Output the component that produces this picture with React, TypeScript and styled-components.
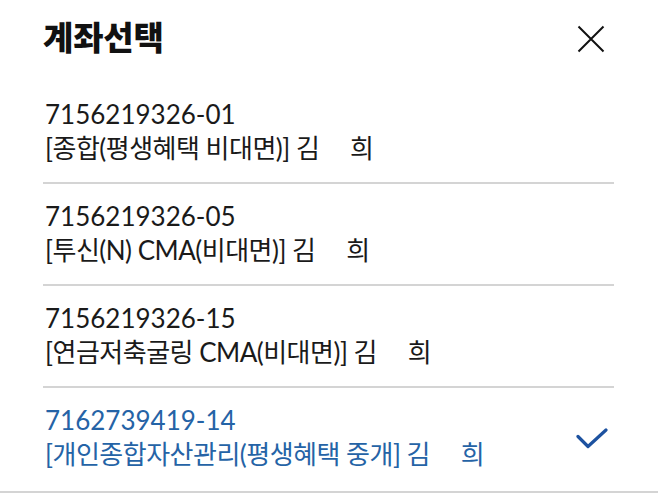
import React from "react";
import styled, { createGlobalStyle } from "styled-components";

const Global = createGlobalStyle`
  html, body { margin: 0; padding: 0; background: #ffffff; }
  body { font-family: Lato, "Noto Sans CJK KR", sans-serif; }
`;

const Sheet = styled.div`
  width: 658px;
  height: 493px;
  background: #ffffff;
  display: flex;
  flex-direction: column;
  box-sizing: border-box;
  border-bottom: 2px solid #d4d4d4;
  overflow: hidden;
`;

const Header = styled.header`
  height: 82px;
  display: flex;
  align-items: center;
  justify-content: space-between;
  padding: 0 44px 10px 43px;
  box-sizing: border-box;
`;

const Title = styled.h1`
  margin: 0;
  font-family: "Noto Sans CJK KR", sans-serif;
  font-weight: 900;
  font-size: 33px;
  line-height: 38px;
  color: #111111;
  letter-spacing: -0.2px;
`;

const CloseButton = styled.button`
  width: 28px;
  height: 28px;
  padding: 0;
  border: none;
  background: none;
  display: flex;
  align-items: center;
  justify-content: center;
  margin-right: 9px;
  margin-top: 6px;
`;

const List = styled.ul`
  list-style: none;
  margin: 0 44px 0 43px;
  padding: 0;
`;

const Row = styled.li<{ $last?: boolean }>`
  display: flex;
  align-items: center;
  justify-content: space-between;
  padding: 15px 0 17px 2px;
  border-bottom: ${(p) => (p.$last ? "none" : "2px solid #d4d4d4")};
`;

const Texts = styled.div<{ $selected?: boolean }>`
  display: flex;
  flex-direction: column;
  color: ${(p) => (p.$selected ? "#2563a6" : "#1a1a1a")};
`;

const Number = styled.div`
  font-family: Lato, "Noto Sans CJK KR", sans-serif;
  font-size: 26px;
  line-height: 34px;
  height: 34px;
`;

const Name = styled.div`
  font-family: Lato, "Noto Sans CJK KR", sans-serif;
  font-size: 26px;
  line-height: 34px;
  height: 34px;
  letter-spacing: -0.5px;
  white-space: pre;
`;

const Check = styled.svg`
  margin-right: 6px;
  margin-top: 4px;
  flex-shrink: 0;
`;

const accounts = [
  { no: "7156219326-01", name: "[종합(평생혜택 비대면)] 김     희" },
  { no: "7156219326-05", name: "[투신(N) CMA(비대면)] 김     희" },
  { no: "7156219326-15", name: "[연금저축굴링 CMA(비대면)] 김     희" },
  { no: "7162739419-14", name: "[개인종합자산관리(평생혜택 중개] 김     희", selected: true },
];

export default function App() {
  return (
    <>
      <Global />
      <Sheet>
        <Header>
          <Title>계좌선택</Title>
          <CloseButton aria-label="닫기">
            <svg width="28" height="28" viewBox="0 0 28 28">
              <path d="M1.5 1.5 L26.5 26.5 M26.5 1.5 L1.5 26.5" stroke="#111" strokeWidth="2" fill="none" />
            </svg>
          </CloseButton>
        </Header>
        <List>
          {accounts.map((a, i) => (
            <Row key={a.no} $last={i === accounts.length - 1}>
              <Texts $selected={a.selected}>
                <Number>{a.no}</Number>
                <Name>{a.name}</Name>
              </Texts>
              {a.selected && (
                <Check width="32" height="22" viewBox="0 0 32 22">
                  <path d="M2 8.5 L12 18.5 L30 2" stroke="#1d52a0" strokeWidth="3.2" fill="none" strokeLinecap="round" strokeLinejoin="round" />
                </Check>
              )}
            </Row>
          ))}
        </List>
      </Sheet>
    </>
  );
}
